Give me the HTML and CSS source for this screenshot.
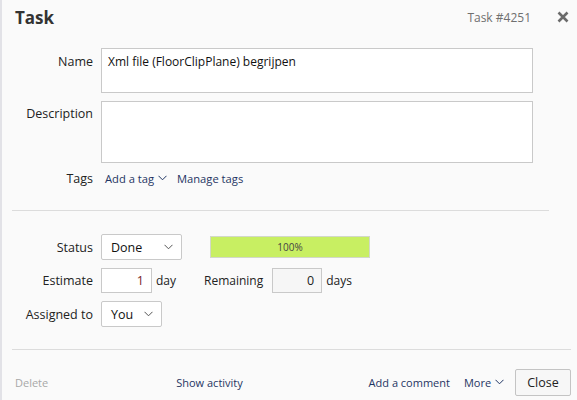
FILE: index.html
```html
<!DOCTYPE html>
<html>
<head>
<meta charset="utf-8">
<link rel="stylesheet" href="styles.css">
</head>
<body>
<div class="dialog">
  <div class="header">
    <h1 class="title">Task</h1>
    <span class="task-id">Task #4251</span>
    <span class="close-x">
      <svg width="12" height="12" viewBox="0 0 12 12"><path d="M1.5 1.5 L10.5 10.5 M10.5 1.5 L1.5 10.5" stroke="#6b6b6b" stroke-width="2.6" stroke-linecap="butt"/></svg>
    </span>
  </div>

  <div class="form top">
    <label class="lbl lbl-name">Name</label>
    <div class="box name-box">Xml file (FloorClipPlane) begrijpen</div>
    <label class="lbl lbl-desc">Description</label>
    <div class="box desc-box"></div>
    <label class="lbl tags-lbl">Tags</label>
    <div class="tags">
      <a class="link">Add a tag <svg class="chev" width="9" height="6" viewBox="0 0 9 6"><path d="M0.5 0.8 L4.5 4.8 L8.5 0.8" fill="none" stroke="#1f3563" stroke-width="1"/></svg></a>
      <a class="link">Manage tags</a>
    </div>
  </div>

  <hr class="sep sep1">

  <div class="form mid">
    <label class="lbl">Status</label>
    <div class="row">
      <div class="select status-sel">Done<svg class="schev" width="9" height="6" viewBox="0 0 9 6"><path d="M0.5 0.8 L4.5 4.8 L8.5 0.8" fill="none" stroke="#555" stroke-width="1"/></svg></div>
      <div class="progress"><span>100%</span></div>
    </div>
    <label class="lbl">Estimate</label>
    <div class="row">
      <div class="num est">1</div><span class="unit">day</span>
      <label class="lbl rem-lbl">Remaining</label>
      <div class="num rem">0</div><span class="unit">days</span>
    </div>
    <label class="lbl">Assigned to</label>
    <div class="row">
      <div class="select you-sel">You<svg class="schev" width="9" height="6" viewBox="0 0 9 6"><path d="M0.5 0.8 L4.5 4.8 L8.5 0.8" fill="none" stroke="#555" stroke-width="1"/></svg></div>
    </div>
  </div>

  <hr class="sep sep2">

  <div class="footer">
    <a class="delete">Delete</a>
    <a class="link show">Show activity</a>
    <a class="link comment">Add a comment</a>
    <a class="link more">More <svg class="chev" width="9" height="6" viewBox="0 0 9 6"><path d="M0.5 0.8 L4.5 4.8 L8.5 0.8" fill="none" stroke="#1f3563" stroke-width="1"/></svg></a>
    <button class="close-btn">Close</button>
  </div>
</div>
</body>
</html>
```
FILE: styles.css
```css
html, body {
  margin: 0;
  padding: 0;
  background: #fafafa;
}
body {
  font-family: "Open Sans", "Liberation Sans", sans-serif;
  font-size: 12px;
  color: #222;
  width: 577px;
  height: 400px;
  overflow: hidden;
}
.dialog {
  border-left: 2px solid #e2e2e7;
  height: 400px;
  box-sizing: border-box;
  padding-left: 10px;
}
.header {
  display: flex;
  align-items: center;
  height: 34px;
}
.title {
  margin: 0 0 0 3px;
  font-size: 17px;
  font-weight: 700;
  color: #333;
  flex: 1;
}
.task-id {
  color: #6f6f6f;
  font-size: 12px;
  margin-right: 26px;
}
.close-x {
  display: flex;
  margin-right: 8px;
}
.form {
  display: grid;
  grid-template-columns: 81px 432px;
  column-gap: 8px;
  align-items: center;
}
.top {
  margin-top: 14px;
  row-gap: 8px;
}
.lbl {
  text-align: right;
  font-size: 12.5px;
  color: #222;
}
.lbl-desc, .lbl-name {
  align-self: start;
}
.lbl-name { padding-top: 5px; }
.lbl-desc { padding-top: 4px; }
.tags-lbl, .tags { margin-top: -3px; }
.box {
  background: #fff;
  border: 1px solid #c9c9c9;
  box-sizing: border-box;
  font-size: 12px;
  color: #111;
  padding: 4px 6px;
}
.name-box { height: 45px; }
.desc-box { height: 62px; }
.tags {
  display: flex;
  gap: 10px;
  padding-left: 4px;
  height: 20px;
  align-items: center;
}
.link {
  color: #1f3563;
  font-size: 11.2px;
  white-space: nowrap;
}
.chev { vertical-align: 2px; margin-left: 1px; }
.sep {
  border: 0;
  border-top: 1px solid #dcdcdc;
  margin: 0;
}
.sep1 { margin-top: 22px; width: 537px; }
.sep2 { margin-top: 22px; width: 559px; }
.mid {
  margin-top: 23px;
  row-gap: 8px;
}
.row {
  display: flex;
  align-items: center;
}
.select {
  background: #fff;
  border: 1px solid #c9c9c9;
  border-radius: 2px;
  box-sizing: border-box;
  height: 26px;
  display: flex;
  align-items: center;
  justify-content: space-between;
  padding: 0 8px 0 9px;
  font-size: 12.5px;
  color: #111;
}
.status-sel { width: 81px; }
.you-sel { width: 61px; }
.progress {
  margin-left: 28px;
  width: 160px;
  height: 22px;
  box-sizing: border-box;
  background: #c8ef62;
  border: 1px solid #d2d8c8;
  display: flex;
  align-items: center;
  justify-content: center;
  font-size: 10px;
  color: #444;
}
.num {
  box-sizing: border-box;
  height: 25px;
  border: 1px solid #c9c9c9;
  background: #fff;
  display: flex;
  align-items: center;
  justify-content: flex-end;
  padding-right: 7px;
  font-size: 12.5px;
}
.est { width: 51px; color: #7a1f1f; }
.rem { width: 50px; background: #f6f6f6; color: #222; }
.unit {
  margin-left: 4px;
  font-size: 12px;
  color: #222;
}
.rem-lbl { margin-left: 28px; margin-right: 9px; font-size: 12px; }
.footer {
  display: flex;
  align-items: center;
  height: 64px;
  padding-right: 6px;
}
.delete {
  color: #a8a8a8;
  font-size: 11px;
  margin-left: 3px;
}
.footer .link { font-size: 11px; }
.show { margin-left: 128px; }
.comment { margin-left: auto; }
.more { margin-left: 14px; }
.close-btn {
  margin-left: 11px;
  width: 56px;
  height: 27px;
  border: 1px solid #c4c4c4;
  border-radius: 2px;
  background: #f7f7f7;
  font-family: inherit;
  font-size: 12.5px;
  color: #222;
  padding: 0;
}
```
